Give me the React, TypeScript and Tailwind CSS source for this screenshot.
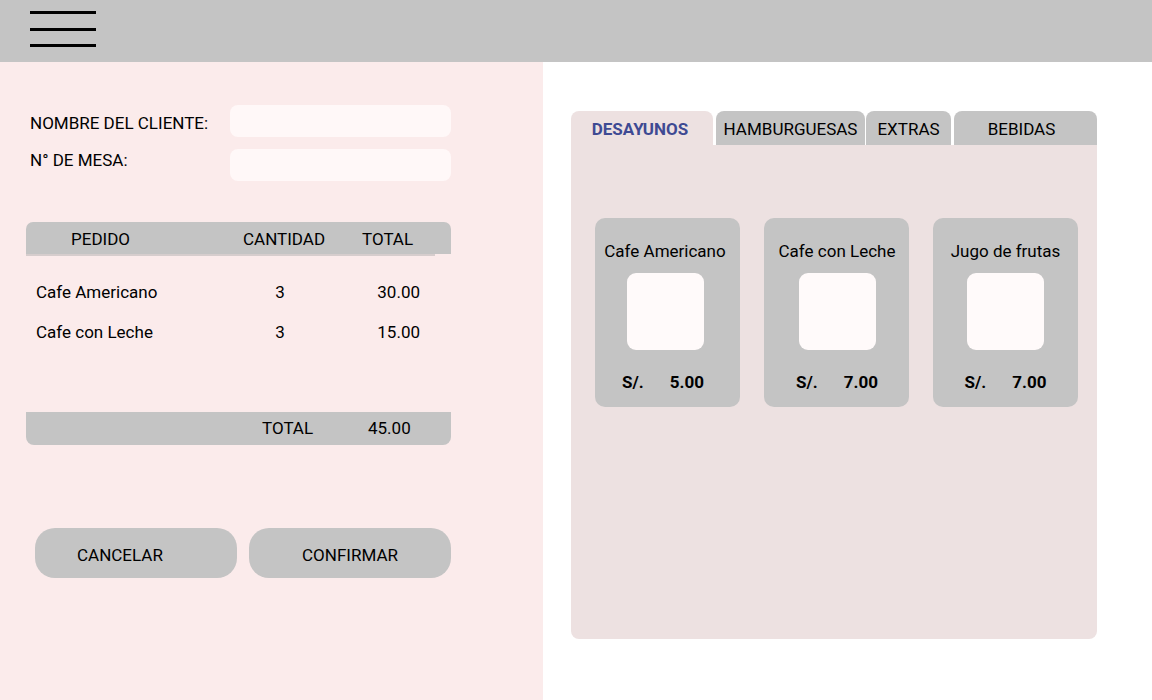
import React from "react";

const products = [
  { name: "Cafe Americano", price: "5.00", shift: "pr-[5px]", priceShift: "pr-[4px]" },
  { name: "Cafe con Leche", price: "7.00", shift: "pl-[1px]", priceShift: "" },
  { name: "Jugo de frutas", price: "7.00", shift: "", priceShift: "" },
];

const orders = [
  { name: "Cafe Americano", qty: "3", total: "30.00" },
  { name: "Cafe con Leche", qty: "3", total: "15.00" },
];

export default function App() {
  return (
    <div
      className="w-[1152px] h-[700px] flex flex-col text-black text-[17px] leading-6 overflow-hidden"
      style={{ fontFamily: "Roboto, 'Liberation Sans', sans-serif" }}
    >
      {/* Header */}
      <div className="h-[62px] bg-[#c4c4c4] pl-[30px] pt-[11px] flex flex-col shrink-0">
        <div className="w-[66px] h-[3px] bg-black" />
        <div className="w-[66px] h-[3px] bg-black mt-[14px]" />
        <div className="w-[66px] h-[3px] bg-black mt-[13px]" />
      </div>

      <div className="flex flex-1">
        {/* Left panel */}
        <div className="w-[543px] bg-[#fbebeb] flex flex-col">
          <div className="flex items-start mt-[43px]">
            <div className="w-[230px] pl-[30px] mt-[6px]">NOMBRE DEL CLIENTE:</div>
            <div className="w-[221px] h-[32px] rounded-[8px] bg-[#fff8f8]" />
          </div>
          <div className="flex items-start mt-[12px]">
            <div className="w-[230px] pl-[30px] -mt-px">N° DE MESA:</div>
            <div className="w-[221px] h-[32px] rounded-[8px] bg-[#fff8f8]" />
          </div>

          {/* Table header */}
          <div className="ml-[26px] w-[425px] mt-[41px] flex flex-col">
            <div className="h-[32px] bg-[#c4c4c4] rounded-t-[7px] flex items-start pt-[5px] pl-[45px]">
              <span className="w-[172px]">PEDIDO</span>
              <span className="w-[119px]">CANTIDAD</span>
              <span>TOTAL</span>
            </div>
            <div className="h-[2px] w-[409px] bg-[#d6cdcd]" />
          </div>

          <div className="ml-[26px] w-[425px] mt-[24px] flex flex-col gap-[16px]">
            {orders.map((o) => (
              <div key={o.name} className="flex h-6 pl-[10px]">
                <span className="w-[224px]">{o.name}</span>
                <span className="w-[40px] text-center">{o.qty}</span>
                <span className="w-[120px] text-right">{o.total}</span>
              </div>
            ))}
          </div>

          <div className="ml-[26px] w-[425px] mt-[68px] h-[33px] bg-[#c4c4c4] rounded-b-[8px] flex items-start pt-[4px] pl-[236px]">
            <span className="w-[106px]">TOTAL</span>
            <span>45.00</span>
          </div>

          <div className="flex ml-[35px] mt-[83px] gap-[12px]">
            <div className="w-[202px] h-[50px] rounded-[20px] bg-[#c4c4c4] pl-[42px] pt-[15px]">
              CANCELAR
            </div>
            <div className="w-[202px] h-[50px] rounded-[20px] bg-[#c4c4c4] pt-[15px] text-center">
              CONFIRMAR
            </div>
          </div>
        </div>

        {/* Right panel */}
        <div className="flex-1 bg-white pl-[28px] pt-[49px]">
          <div className="w-[526px] flex flex-col">
            <div className="flex h-[34px]">
              <div className="w-[142px] rounded-t-[8px] bg-[#ede1e1] text-center pt-[6px] pr-[4px] font-bold text-[#3e4a93]">
                DESAYUNOS
              </div>
              <div className="w-[149px] ml-[3px] rounded-t-[8px] bg-[#c4c4c4] text-center pt-[6px]">
                HAMBURGUESAS
              </div>
              <div className="w-[85px] ml-[1px] rounded-t-[8px] bg-[#c4c4c4] text-center pt-[6px]">
                EXTRAS
              </div>
              <div className="w-[143px] ml-[3px] rounded-t-[8px] bg-[#c4c4c4] text-center pt-[6px] pr-[8px]">
                BEBIDAS
              </div>
            </div>
            <div className="h-[494px] bg-[#ede1e1] rounded-b-[8px] pl-[24px] pt-[73px]">
              <div className="flex gap-[24px]">
                {products.map((p) => (
                  <div
                    key={p.name}
                    className={`w-[145px] h-[189px] rounded-[10px] bg-[#c4c4c4] flex flex-col items-center pt-[21px] ${p.shift}`}
                  >
                    <div className="whitespace-nowrap">{p.name}</div>
                    <div className="w-[77px] h-[77px] rounded-[9px] bg-[#fffafa] mt-[10px]" />
                    <div className={`flex font-bold mt-[20px] ${p.priceShift}`}>
                      <span>S/.</span>
                      <span className="ml-[26px]">{p.price}</span>
                    </div>
                  </div>
                ))}
              </div>
            </div>
          </div>
        </div>
      </div>
    </div>
  );
}
